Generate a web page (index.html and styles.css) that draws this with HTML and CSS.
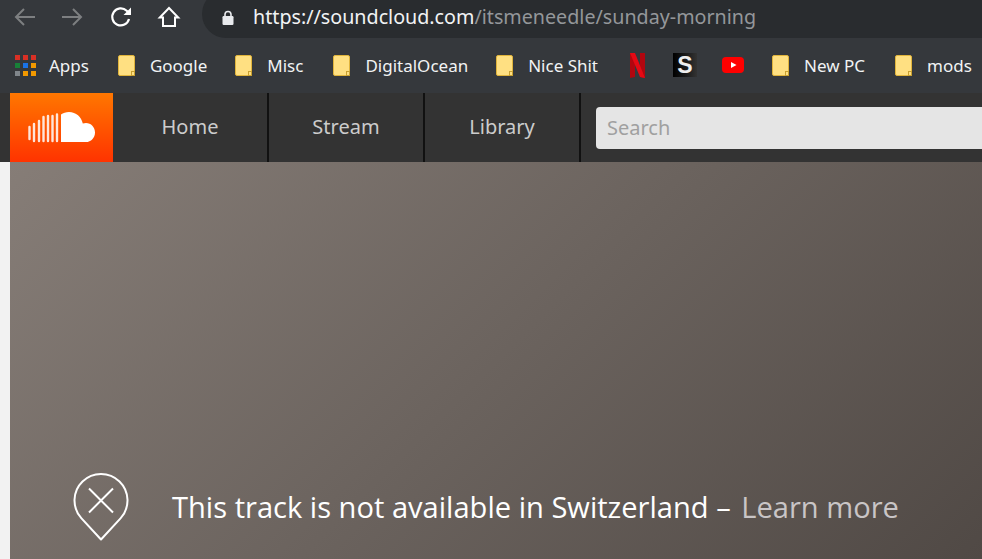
FILE: index.html
```html
<!DOCTYPE html>
<html lang="en">
<head>
    <meta charset="UTF-8">
    <meta name="viewport" content="width=device-width, initial-scale=1.0">
    <title>Sunday Morning</title>
    <link rel="stylesheet" href="styles.css">
</head>
<body>
    <div class="toolbar">
        <svg class="tool tool-back" width="24" height="24" viewBox="0 0 24 24"><path d="M22 12H3M11 4 3 12l8 8" fill="none" stroke="#7d7f81" stroke-width="2"/></svg>
        <svg class="tool tool-forward" width="24" height="24" viewBox="0 0 24 24"><path d="M2 12h19M13 4l8 8-8 8" fill="none" stroke="#7d7f81" stroke-width="2"/></svg>
        <svg class="tool tool-reload" width="24" height="24" viewBox="0 0 24 24"><path d="M20 14a8.500 8.500 0 1 1-2.300-8.200L20 8" fill="none" stroke="#fff" stroke-width="2.200"/><path d="M22 2.500V10h-7.500z" fill="#fff"/></svg>
        <svg class="tool tool-home" width="24" height="24" viewBox="0 0 24 24"><path d="M12 3 2.800 12.500H6V21h12v-8.500h3.200z" fill="none" stroke="#fff" stroke-width="2"/></svg>
        <div class="omnibox">
            <svg class="lock" width="14" height="16" viewBox="0 0 14 16"><path d="M4 7V4.500a3 3 0 0 1 6 0V7" fill="none" stroke="#e8eaed" stroke-width="1.600"/><rect x="1.500" y="6" width="11" height="9" rx="1.200" fill="#e8eaed"/></svg>
            <span class="url"><span class="url-host">https://soundcloud.com</span>/itsmeneedle/sunday-morning</span>
        </div>
    </div>

    <div class="bookmarks">
        <div class="mark mark-apps">
            <div class="apps-grid">
                <i class="red"></i><i class="red"></i><i class="red"></i>
                <i class="green"></i><i class="blue"></i><i class="amber"></i>
                <i class="gray"></i><i class="amber"></i><i class="amber"></i>
            </div>
            <span>Apps</span>
        </div>
        <div class="mark mark-google"><span class="folder"></span><span>Google</span></div>
        <div class="mark mark-misc"><span class="folder"></span><span>Misc</span></div>
        <div class="mark mark-ocean"><span class="folder"></span><span>DigitalOcean</span></div>
        <div class="mark mark-nice"><span class="folder"></span><span>Nice Shit</span></div>
        <svg class="fav-netflix" width="15" height="25" viewBox="0 0 15 25"><path d="M0 0h5v24l-5 1z" fill="#b1060f"/><path d="M10 0h5v25l-5-1z" fill="#b1060f"/><path d="M0 0h5l10 25-5-1z" fill="#e50914"/></svg>
        <div class="fav-s">S</div>
        <svg class="fav-yt" width="22" height="16" viewBox="0 0 22 16"><rect width="22" height="16" rx="4" fill="#f00"/><path d="M9 5l5.500 3L9 11z" fill="#fff"/></svg>
        <div class="mark mark-pc"><span class="folder"></span><span>New PC</span></div>
        <div class="mark mark-mods"><span class="folder"></span><span>mods</span></div>
    </div>

    <div class="site-header">
        <div class="logo">
            <svg width="67" height="31" viewBox="0 0 67 31">
                <g fill="none" stroke="#fff" stroke-width="2.400" stroke-linecap="round" opacity="0.85">
                    <path d="M1.500 15v12M6 12v17M11 9v20M15.500 5v24M20 4v25M24.500 4v25M29 2.500v26.500"/>
                </g>
                <path d="M33 30V2.500C35 1 38 0 41 0c7 0 12.500 5 13.800 11.500 1-.4 2-.6 3.200-.6 5 0 9 4.200 9 9.500S63 30 58 30z" fill="#fff"/>
            </svg>
        </div>
        <a class="nav-item">Home</a>
        <a class="nav-item">Stream</a>
        <a class="nav-item">Library</a>
        <div class="search">Search</div>
    </div>

    <div class="page">
        <div class="hero">
            <svg class="pin" width="58" height="69" viewBox="0 0 58 69">
                <path d="M29 67.500 9.500 46.400A26.500 26.500 0 1 1 48.500 46.400z" fill="none" stroke="#fff" stroke-width="2" stroke-linejoin="round"/>
                <path d="M17 16.500l24 24M41 16.500l-24 24" fill="none" stroke="#fff" stroke-width="2"/>
            </svg>
            <p class="notice">This track is not available in Switzerland – <a class="learn">Learn more</a></p>
        </div>
    </div>
</body>
</html>
```

FILE: styles.css
```css
html, body {
    margin: 0;
    padding: 0;
    height: 559px;
    overflow: hidden;
    background: #f2f2f2;
    font-family: "Noto Sans", "Open Sans", sans-serif;
}

.toolbar {
    display: flex;
    align-items: center;
    height: 38px;
    background: #35383c;
    overflow: hidden;
}

.tool {
    flex: none;
    margin-top: -5px;
}

.tool-back {
    margin-left: 13px;
}

.tool-forward {
    margin-left: 23px;
}

.tool-reload {
    margin-left: 25px;
}

.tool-home {
    margin-left: 24px;
}

.omnibox {
    flex: 1;
    display: flex;
    align-items: center;
    height: 48px;
    margin: -10px 0 0 21px;
    padding-top: 10px;
    box-sizing: border-box;
    background: #292c2f;
    border-radius: 24px 0 0 24px;
}

.lock {
    margin-left: 19px;
    margin-top: -2px;
}

.url {
    margin-left: 18px;
    margin-top: -5px;
    font-size: 19.700px;
    color: #94979a;
    white-space: nowrap;
}

.url-host {
    color: #f1f3f4;
}

.bookmarks {
    display: flex;
    align-items: center;
    height: 55px;
    box-sizing: border-box;
    padding-bottom: 1px;
    background: #35383c;
    color: #f1f3f4;
    font-size: 17px;
    white-space: nowrap;
}

.mark {
    display: flex;
    align-items: center;
}

.mark-apps {
    margin-left: 15px;
    gap: 13px;
}

.apps-grid {
    display: grid;
    grid-template-columns: repeat(3, 5px);
    gap: 3px;
}

.apps-grid i {
    height: 5px;
}

.red { background: #d93025; }
.green { background: #188038; }
.blue { background: #1a73e8; }
.amber { background: #f29900; }
.gray { background: #80868b; }

.mark-google { margin-left: 29px; }
.mark-misc { margin-left: 28px; }
.mark-ocean { margin-left: 30px; }
.mark-nice { margin-left: 28px; }
.mark-pc { margin-left: 28px; }
.mark-mods { margin-left: 30px; }

.folder {
    position: relative;
    width: 17px;
    height: 21px;
    margin-right: 15px;
    box-sizing: border-box;
    background: #ffe082;
    border: 1px solid #e0b43c;
    border-radius: 2px;
}

.folder::after {
    content: "";
    position: absolute;
    right: -1px;
    bottom: -1px;
    width: 4px;
    height: 5px;
    background: #ffe082;
    border: 1px solid #c9a030;
    box-sizing: border-box;
}

.fav-netflix {
    margin-left: 32px;
}

.fav-s {
    width: 24px;
    height: 24px;
    margin-left: 28px;
    background: linear-gradient(90deg, #000, #222 70%, #333);
    color: #eee;
    font: bold 23px/24px "Liberation Sans", sans-serif;
    text-align: center;
}

.fav-yt {
    margin-left: 25px;
}

.site-header {
    display: flex;
    align-items: stretch;
    height: 69px;
    padding-left: 10px;
    background: #333;
}

.logo {
    display: flex;
    align-items: center;
    justify-content: center;
    width: 103px;
    background: linear-gradient(#f70, #f30);
}

.nav-item {
    display: flex;
    align-items: center;
    justify-content: center;
    width: 154px;
    padding-bottom: 2px;
    box-sizing: content-box;
    border-right: 2px solid #111;
    color: #ccc;
    font-size: 20px;
}

.search {
    flex: 1;
    align-self: center;
    height: 42px;
    margin-left: 15px;
    padding-left: 11px;
    background: #e5e5e5;
    border-radius: 4px 0 0 4px;
    color: #a0a0a0;
    font-size: 20px;
    line-height: 42px;
}

.page {
    height: 397px;
    padding-left: 10px;
}

.hero {
    display: flex;
    align-items: flex-end;
    height: 100%;
    box-sizing: border-box;
    padding: 0 0 18px 62px;
    background: linear-gradient(135deg, #867d77, #504945);
}

.pin {
    flex: none;
}

.notice {
    margin: 0 0 14px 42px;
    color: #fff;
    font-family: "Open Sans", sans-serif;
    font-size: 29.100px;
    line-height: 40px;
    white-space: nowrap;
}

.learn {
    margin-left: 3px;
    color: #c9c5c6;
}
```
